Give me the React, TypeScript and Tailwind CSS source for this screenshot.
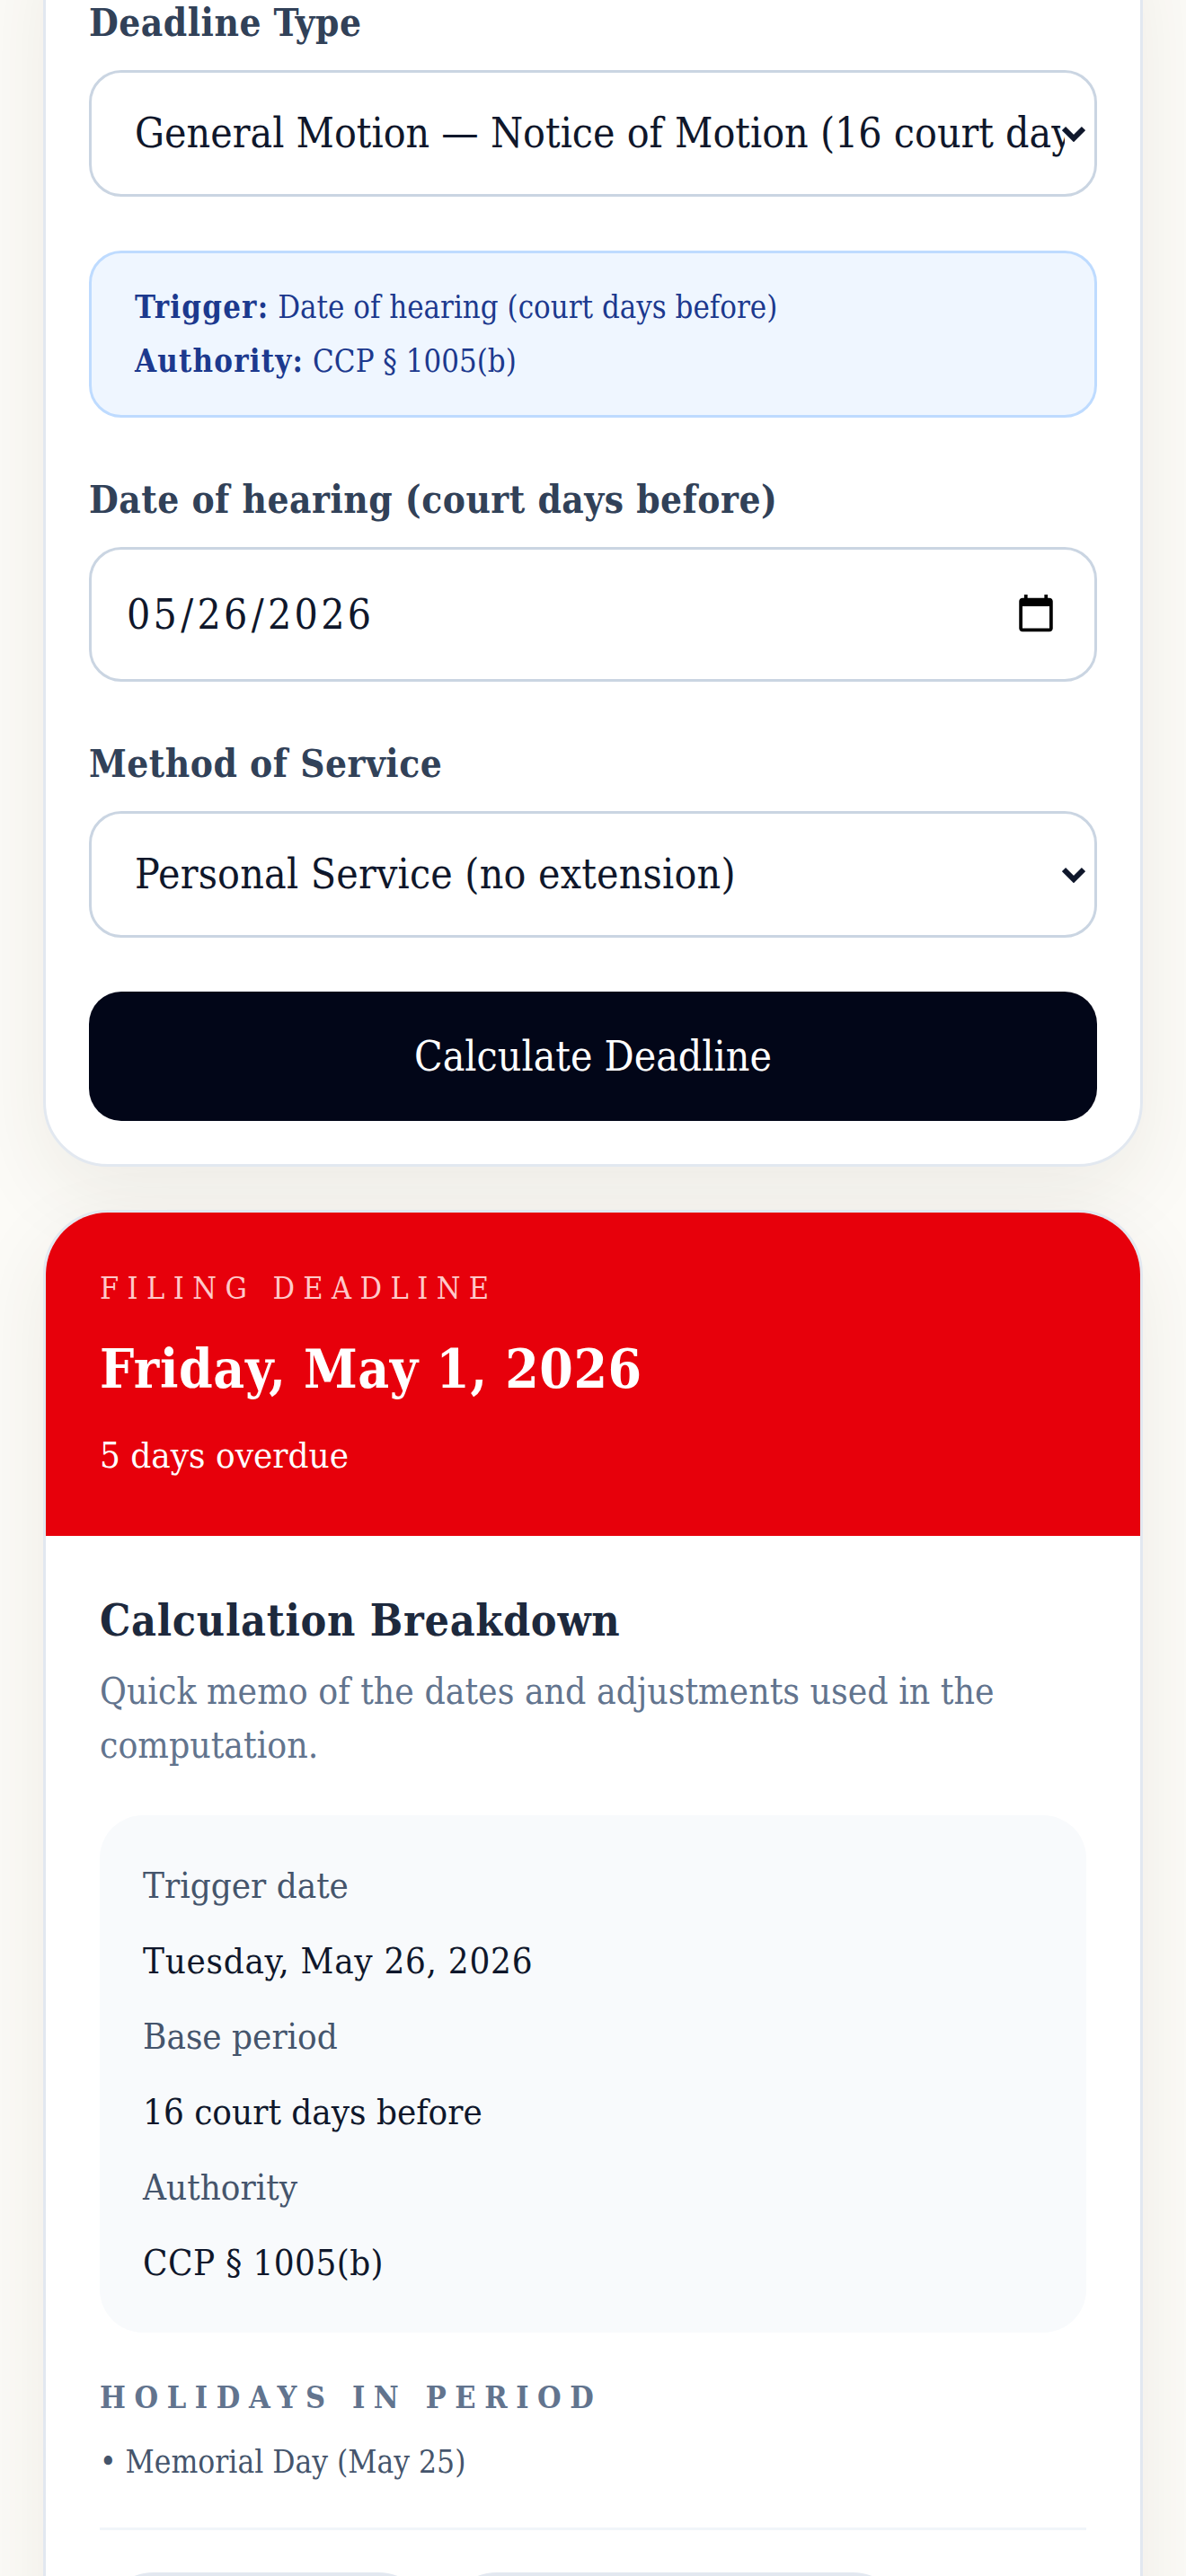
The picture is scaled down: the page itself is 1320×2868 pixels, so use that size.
function Chevron() {
  return (
    <svg viewBox="0 0 26 18" className="absolute right-[13px] top-1/2 -translate-y-1/2 w-[26px] h-[18px] pointer-events-none" fill="none" stroke="#0f172b" strokeWidth="6">
      <path d="M2 3l11 11L24 3" />
    </svg>
  );
}

function Label({ children }: { children: React.ReactNode }) {
  return <label className="block pt-[3px] text-[42px] leading-[57px] tracking-[0.5px] font-bold text-[#314158] mb-[24px]">{children}</label>;
}

function Field({ text, spacing }: { text: string; spacing: string }) {
  return (
    <div className="relative">
      <select className={`appearance-none w-full h-[141px] bg-white border-[3px] border-[#cad5e2] rounded-[36px] pl-[48px] pr-[33px] text-[46px] text-[#0f172b] outline-none ${spacing}`} defaultValue={text}>
        <option>{text}</option>
      </select>
      <Chevron />
    </div>
  );
}

function Row({ label, value, spacing = '' }: { label: string; value: string; spacing?: string }) {
  return (
    <>
      <div className="text-[40px] leading-[60px] text-[#45556c]">{label}</div>
      <div className={`text-[40px] leading-[60px] text-[#0f172b] ${spacing}`}>{value}</div>
    </>
  );
}

export default function App() {
  return (
    <div className="h-[2868px] overflow-hidden bg-[#fcfbf7] px-[48px] font-['DejaVu_Serif_Condensed','DejaVu_Serif',serif]">
      {/* Form card */}
      <section className="-mt-[100px] bg-white border-[3px] border-[#e2e8f0] rounded-[72px] shadow-[0_30px_90px_0_rgba(60,50,20,0.08)] pt-[91px] px-[48px] pb-[48px] flex flex-col gap-[60px]">
        <div>
          <Label>Deadline Type</Label>
          <Field text="General Motion — Notice of Motion (16 court days before hearing)" spacing="tracking-[0px]" />
        </div>
        <div className="h-[186px] bg-[#eff6ff] border-[3px] border-[#bedbff] rounded-[36px] px-[48px] py-[30px] text-[34.5px] leading-[60px] text-[#1c398e]">
          <div><b className="tracking-[1.2px]">Trigger:</b> Date of hearing (court days before)</div>
          <div><b className="tracking-[1.2px]">Authority:</b> CCP § 1005(b)</div>
        </div>
        <div>
          <Label>Date of hearing (court days before)</Label>
          <input type="date" defaultValue="2026-05-26" className="block w-full h-[150px] bg-white border-[3px] border-[#cad5e2] rounded-[36px] pl-[38px] pr-[41px] text-[46px] tracking-[3.3px] text-[#0f172b] outline-none [&::-webkit-calendar-picker-indicator]:w-[48px] [&::-webkit-calendar-picker-indicator]:h-[48px] [&::-webkit-calendar-picker-indicator]:p-0" />
        </div>
        <div>
          <Label>Method of Service</Label>
          <Field text="Personal Service (no extension)" spacing="tracking-[0.2px]" />
        </div>
        <button className="h-[144px] bg-[#020618] rounded-[36px] text-white text-[46px]">Calculate Deadline</button>
      </section>

      {/* Result card */}
      <section className="mt-[48px] bg-white border-[3px] border-[#e2e8f0] rounded-[72px] shadow-[0_30px_90px_0_rgba(60,50,20,0.08)] overflow-hidden">
        <div className="h-[360px] bg-[#e7000b] p-[60px]">
          <div className="text-[34px] leading-[48px] tracking-[9.4px] text-[#ffc9c9]">FILING DEADLINE</div>
          <div className="mt-[18px] mb-[18px] text-[60px] leading-[96px] tracking-[0.6px] font-bold text-white">Friday, May 1, 2026</div>
          <div className="text-[40px] leading-[60px] text-white">5 days overdue</div>
        </div>
        <div className="p-[60px]">
          <h2 className="mt-[3px] text-[48px] leading-[63px] tracking-[0.7px] font-bold text-[#1d293d] mb-[17px]">Calculation Breakdown</h2>
          <p className="text-[40.5px] leading-[60px] text-[#62748e]">Quick memo of the dates and adjustments used in the computation.</p>
          <div className="mt-[48px] bg-[#f8fafc] rounded-[48px] p-[48px] flex flex-col gap-[24px]">
            <Row label="Trigger date" value="Tuesday, May 26, 2026" spacing="tracking-[0.7px]" />
            <Row label="Base period" value="16 court days before" />
            <Row label="Authority" value="CCP § 1005(b)" spacing="tracking-[0.4px]" />
          </div>
          <div className="mt-[48px] text-[34px] leading-[48px] font-bold tracking-[9.6px] text-[#62748e]">HOLIDAYS IN PERIOD</div>
          <div className="mt-[21px] text-[35px] leading-[54px] text-[#45556c]">• Memorial Day (May 25)</div>
          <div className="mt-[46px] border-t-[3px] border-[#f1f5f9] pt-[47px] flex gap-[12px]">
            <div className="w-[370px] h-[120px] bg-[#e2e8f0] rounded-full" />
            <div className="w-[516px] h-[120px] bg-[#e2e8f0] rounded-full" />
          </div>
        </div>
      </section>
    </div>
  );
}
